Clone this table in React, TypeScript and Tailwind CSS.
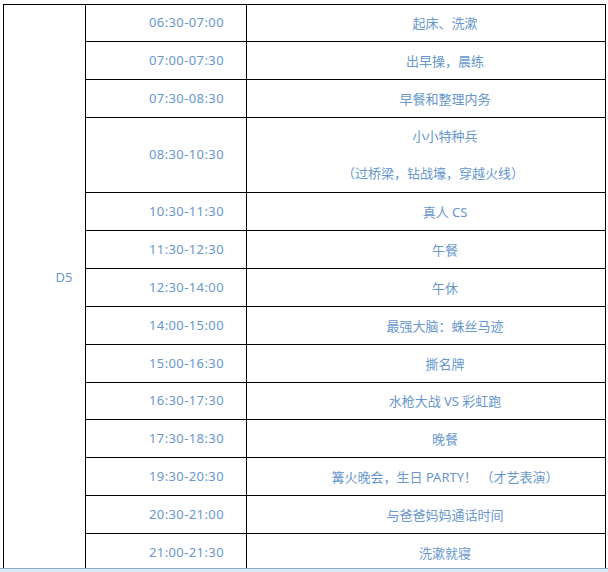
const rows: { time: string; lines: string[]; h: string }[] = [
  { time: '06:30-07:00', lines: ['起床、洗漱'], h: 'h-[37px]' },
  { time: '07:00-07:30', lines: ['出早操，晨练'], h: 'h-[38px]' },
  { time: '07:30-08:30', lines: ['早餐和整理内务'], h: 'h-[38px]' },
  { time: '08:30-10:30', lines: ['小小特种兵', '（过桥梁，钻战壕，穿越火线）'], h: 'h-[75px]' },
  { time: '10:30-11:30', lines: ['真人 CS'], h: 'h-[38px]' },
  { time: '11:30-12:30', lines: ['午餐'], h: 'h-[38px]' },
  { time: '12:30-14:00', lines: ['午休'], h: 'h-[38px]' },
  { time: '14:00-15:00', lines: ['最强大脑：蛛丝马迹'], h: 'h-[38px]' },
  { time: '15:00-16:30', lines: ['撕名牌'], h: 'h-[38px]' },
  { time: '16:30-17:30', lines: ['水枪大战 VS 彩虹跑'], h: 'h-[37px]' },
  { time: '17:30-18:30', lines: ['晚餐'], h: 'h-[38px]' },
  { time: '19:30-20:30', lines: ['篝火晚会，生日 PARTY！ （才艺表演）'], h: 'h-[38px]' },
  { time: '20:30-21:00', lines: ['与爸爸妈妈通话时间'], h: 'h-[38px]' },
  { time: '21:00-21:30', lines: ['洗漱就寝'], h: 'h-[38px]' },
];

export default function App() {
  return (
    <div className="w-[608px] h-[572px] bg-white overflow-hidden">
      <div className="h-[568px] overflow-hidden pt-[4px] pl-[3px]">
        <table
          className="table-fixed border-collapse text-[13px] text-[#6797cd] w-[602px]"
          style={{ fontFamily: '"Noto Sans", "Noto Sans CJK SC", sans-serif' }}
        >
          <colgroup>
            <col className="w-[82px]" />
            <col className="w-[161px]" />
            <col className="w-[359px]" />
          </colgroup>
          <tbody>
            {rows.map((r, i) => (
              <tr key={r.time} className={r.h}>
                {i === 0 && (
                  <td rowSpan={rows.length} className="border border-black text-center align-middle pl-[39px] pb-[20px]">
                    D5
                  </td>
                )}
                <td className="border border-black text-center align-middle pl-[41px] p-0 tracking-[0.4px]">{r.time}</td>
                <td className="border border-black text-center align-middle pl-[38px] p-0">
                  {r.lines.map((l, j) => (
                    <div
                      key={l}
                      className={r.lines.length > 1 ? (j === 1 ? 'leading-[37px] pr-[24px]' : 'leading-[37px]') : 'leading-[20px]'}
                    >
                      {l}
                    </div>
                  ))}
                </td>
              </tr>
            ))}
          </tbody>
        </table>
      </div>
      <div className="h-[4px] bg-[#dde9f5] border-t border-[#8ea9c3]" />
    </div>
  );
}
